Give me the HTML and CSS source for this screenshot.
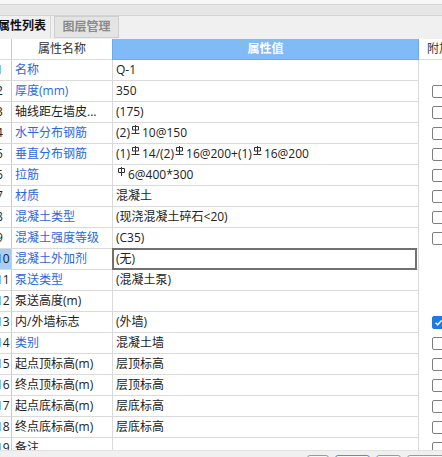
FILE: index.html
```html
<!DOCTYPE html>
<html lang="zh">
<head>
<meta charset="utf-8">
<title>属性列表</title>
<link rel="stylesheet" href="styles.css">
</head>
<body>
<div class="app">
  <div class="strip1"></div>
  <div class="strip2"></div>
  <div class="tabs">
    <div class="tab active">属性列表</div>
    <div class="tab">图层管理</div>
  </div>
  <div class="grid">
    <div class="row hdr">
      <div class="cell num"></div>
      <div class="cell name">属性名称</div>
      <div class="cell val">属性值</div>
      <div class="cell extra">附加</div>
    </div>
    <div class="row"><div class="cell num">1</div><div class="cell name blue">名称</div><div class="cell val">Q-1</div><div class="cell chk"></div></div>
    <div class="row"><div class="cell num">2</div><div class="cell name blue">厚度(mm)</div><div class="cell val">350</div><div class="cell chk"><span class="box"></span></div></div>
    <div class="row"><div class="cell num">3</div><div class="cell name">轴线距左墙皮...</div><div class="cell val">(175)</div><div class="cell chk"><span class="box"></span></div></div>
    <div class="row"><div class="cell num">4</div><div class="cell name blue">水平分布钢筋</div><div class="cell val">(2)<svg class="sym" viewBox="0 0 9 9"><path d="M4.5 0V9M1.5 1.5H7.5V5H1.5ZM0.5 8.5H8.5"/></svg>10@150</div><div class="cell chk"><span class="box"></span></div></div>
    <div class="row"><div class="cell num">5</div><div class="cell name blue">垂直分布钢筋</div><div class="cell val">(1)<svg class="sym" viewBox="0 0 9 9"><path d="M4.5 0V9M1.5 1.5H7.5V5H1.5ZM0.5 8.5H8.5"/></svg>14/(2)<svg class="sym" viewBox="0 0 9 9"><path d="M4.5 0V9M1.5 1.5H7.5V5H1.5ZM0.5 8.5H8.5"/></svg>16@200+(1)<svg class="sym" viewBox="0 0 9 9"><path d="M4.5 0V9M1.5 1.5H7.5V5H1.5ZM0.5 8.5H8.5"/></svg>16@200</div><div class="cell chk"><span class="box"></span></div></div>
    <div class="row"><div class="cell num">6</div><div class="cell name blue">拉筋</div><div class="cell val"><svg class="sym" viewBox="0 0 9 9"><path d="M4.5 0V9M1.5 1.5H7.5V5.5H1.5Z"/></svg>6@400*300</div><div class="cell chk"><span class="box"></span></div></div>
    <div class="row"><div class="cell num">7</div><div class="cell name blue">材质</div><div class="cell val">混凝土</div><div class="cell chk"><span class="box"></span></div></div>
    <div class="row"><div class="cell num">8</div><div class="cell name blue">混凝土类型</div><div class="cell val">(现浇混凝土碎石&lt;20)</div><div class="cell chk"><span class="box"></span></div></div>
    <div class="row"><div class="cell num">9</div><div class="cell name blue">混凝土强度等级</div><div class="cell val">(C35)</div><div class="cell chk"><span class="box"></span></div></div>
    <div class="row sel"><div class="cell num">10</div><div class="cell name blue">混凝土外加剂</div><div class="cell val">(无)</div><div class="cell chk"></div></div>
    <div class="row"><div class="cell num">11</div><div class="cell name blue">泵送类型</div><div class="cell val">(混凝土泵)</div><div class="cell chk"></div></div>
    <div class="row"><div class="cell num">12</div><div class="cell name">泵送高度(m)</div><div class="cell val"></div><div class="cell chk"></div></div>
    <div class="row"><div class="cell num">13</div><div class="cell name">内/外墙标志</div><div class="cell val">(外墙)</div><div class="cell chk"><span class="box on"><svg viewBox="0 0 13 13"><path d="M3 6.8L5.6 9.2L10.2 4"/></svg></span></div></div>
    <div class="row"><div class="cell num">14</div><div class="cell name blue">类别</div><div class="cell val">混凝土墙</div><div class="cell chk"><span class="box"></span></div></div>
    <div class="row"><div class="cell num">15</div><div class="cell name">起点顶标高(m)</div><div class="cell val">层顶标高</div><div class="cell chk"><span class="box"></span></div></div>
    <div class="row"><div class="cell num">16</div><div class="cell name">终点顶标高(m)</div><div class="cell val">层顶标高</div><div class="cell chk"><span class="box"></span></div></div>
    <div class="row"><div class="cell num">17</div><div class="cell name">起点底标高(m)</div><div class="cell val">层底标高</div><div class="cell chk"><span class="box"></span></div></div>
    <div class="row"><div class="cell num">18</div><div class="cell name">终点底标高(m)</div><div class="cell val">层底标高</div><div class="cell chk"><span class="box"></span></div></div>
    <div class="row"><div class="cell num">19</div><div class="cell name">备注</div><div class="cell val"></div><div class="cell chk"><span class="box"></span></div></div>
  </div>
  <div class="bottombar">
    <span class="btn b1"></span>
    <span class="btn b2"></span>
    <span class="btn b3"></span>
    <span class="btn b4"></span>
  </div>
</div>
</body>
</html>
```
FILE: styles.css
```css
* { box-sizing: border-box; }
html, body { margin: 0; padding: 0; }
body {
  width: 442px;
  height: 457px;
  overflow: hidden;
  background: #fff;
  font-family: "Open Sans", "Noto Sans CJK SC", sans-serif;
  font-size: 12px;
  color: #222;
}
.app { width: 442px; height: 457px; overflow: hidden; }
.strip1 { height: 5px; background: #f6f6f6; border-bottom: 1px solid #d4d4d4; }
.strip2 { height: 11px; background: #e6e6e6; border-bottom: 1px solid #d4d4d4; }
.tabs {
  height: 23px;
  background: #f0f0f0;
  display: flex;
  align-items: flex-start;
}
.tab {
  height: 22px;
  line-height: 20px;
  font-weight: bold;
  text-align: center;
  white-space: nowrap;
  font-size: 12px;
}
.tab.active {
  width: 57px;
  margin-left: -6px;
  color: #111;
  border-right: 1px solid #d6d6d6;
}
.tab:not(.active) {
  width: 65px;
  margin-left: 3px;
  background: #e4e4e4;
  border: 1px solid #cfcfcf;
  color: #8a8a8a;
}
.grid { height: 411px; overflow: hidden; }
.row {
  display: grid;
  grid-template-columns: 12px 101px 306px 23px;
  height: 21px;
}
.cell {
  height: 21px;
  line-height: 20px;
  border-right: 1px solid #dadada;
  border-bottom: 1px solid #dadada;
  white-space: nowrap;
  overflow: hidden;
  padding-left: 3px;
}
.num {
  padding-left: 0;
  text-indent: -4px;
  border-right-color: #cbcbcb;
  color: #222;
}
.blue { color: #2b67da; }
.hdr .name { text-align: center; padding-left: 0; color: #333; }
.hdr .val {
  background: #80bbf7;
  color: #fff;
  font-weight: bold;
  text-align: center;
  padding-left: 0;
  border-right-color: #6fa9ea;
  border-bottom-color: #6fa9ea;
  border-left: 1px solid #6fa9ea;
  margin-left: -1px;
}
.hdr .extra { border-right: 0; padding-left: 8px; color: #333; }
.chk {
  border-right: 0;
  border-bottom: 0;
  padding-left: 13px;
  padding-top: 4px;
}
.box {
  display: block;
  width: 13px;
  height: 13px;
  border: 1px solid #7e7e7e;
  border-radius: 2px;
  background: #fff;
}
.box.on { background: #1f7ae0; border-color: #1f7ae0; }
.box.on svg { display: block; width: 11px; height: 11px; margin: 0; }
.box.on path { fill: none; stroke: #fff; stroke-width: 1.8; }
.sym {
  width: 9px;
  height: 9px;
  vertical-align: 3px;
  margin: 0 2px 0 1px;
}
.sym path { fill: none; stroke: #333; stroke-width: 1; }
.sel .num { background: #a9cef6; }
.sel .val { position: relative; overflow: visible; }
.sel .val::after {
  content: "";
  position: absolute;
  top: -1px;
  left: -1px;
  right: 1px;
  bottom: -1px;
  border: 2px solid #717171;
}
.bottombar {
  height: 40px;
  background: #f0f0f0;
  border-top: 1px solid #e2e2e2;
  display: flex;
  gap: 6px;
  padding-left: 307px;
  padding-top: 4px;
}
.btn {
  display: block;
  height: 22px;
  border: 1px solid #9a9a9a;
  border-radius: 3px;
  background: #f7f7f7;
  flex: none;
}
.b1 { width: 22px; }
.b2 { width: 35px; border-color: #4a8fe0; }
.b3 { width: 25px; }
.b4 { width: 50px; }
```
